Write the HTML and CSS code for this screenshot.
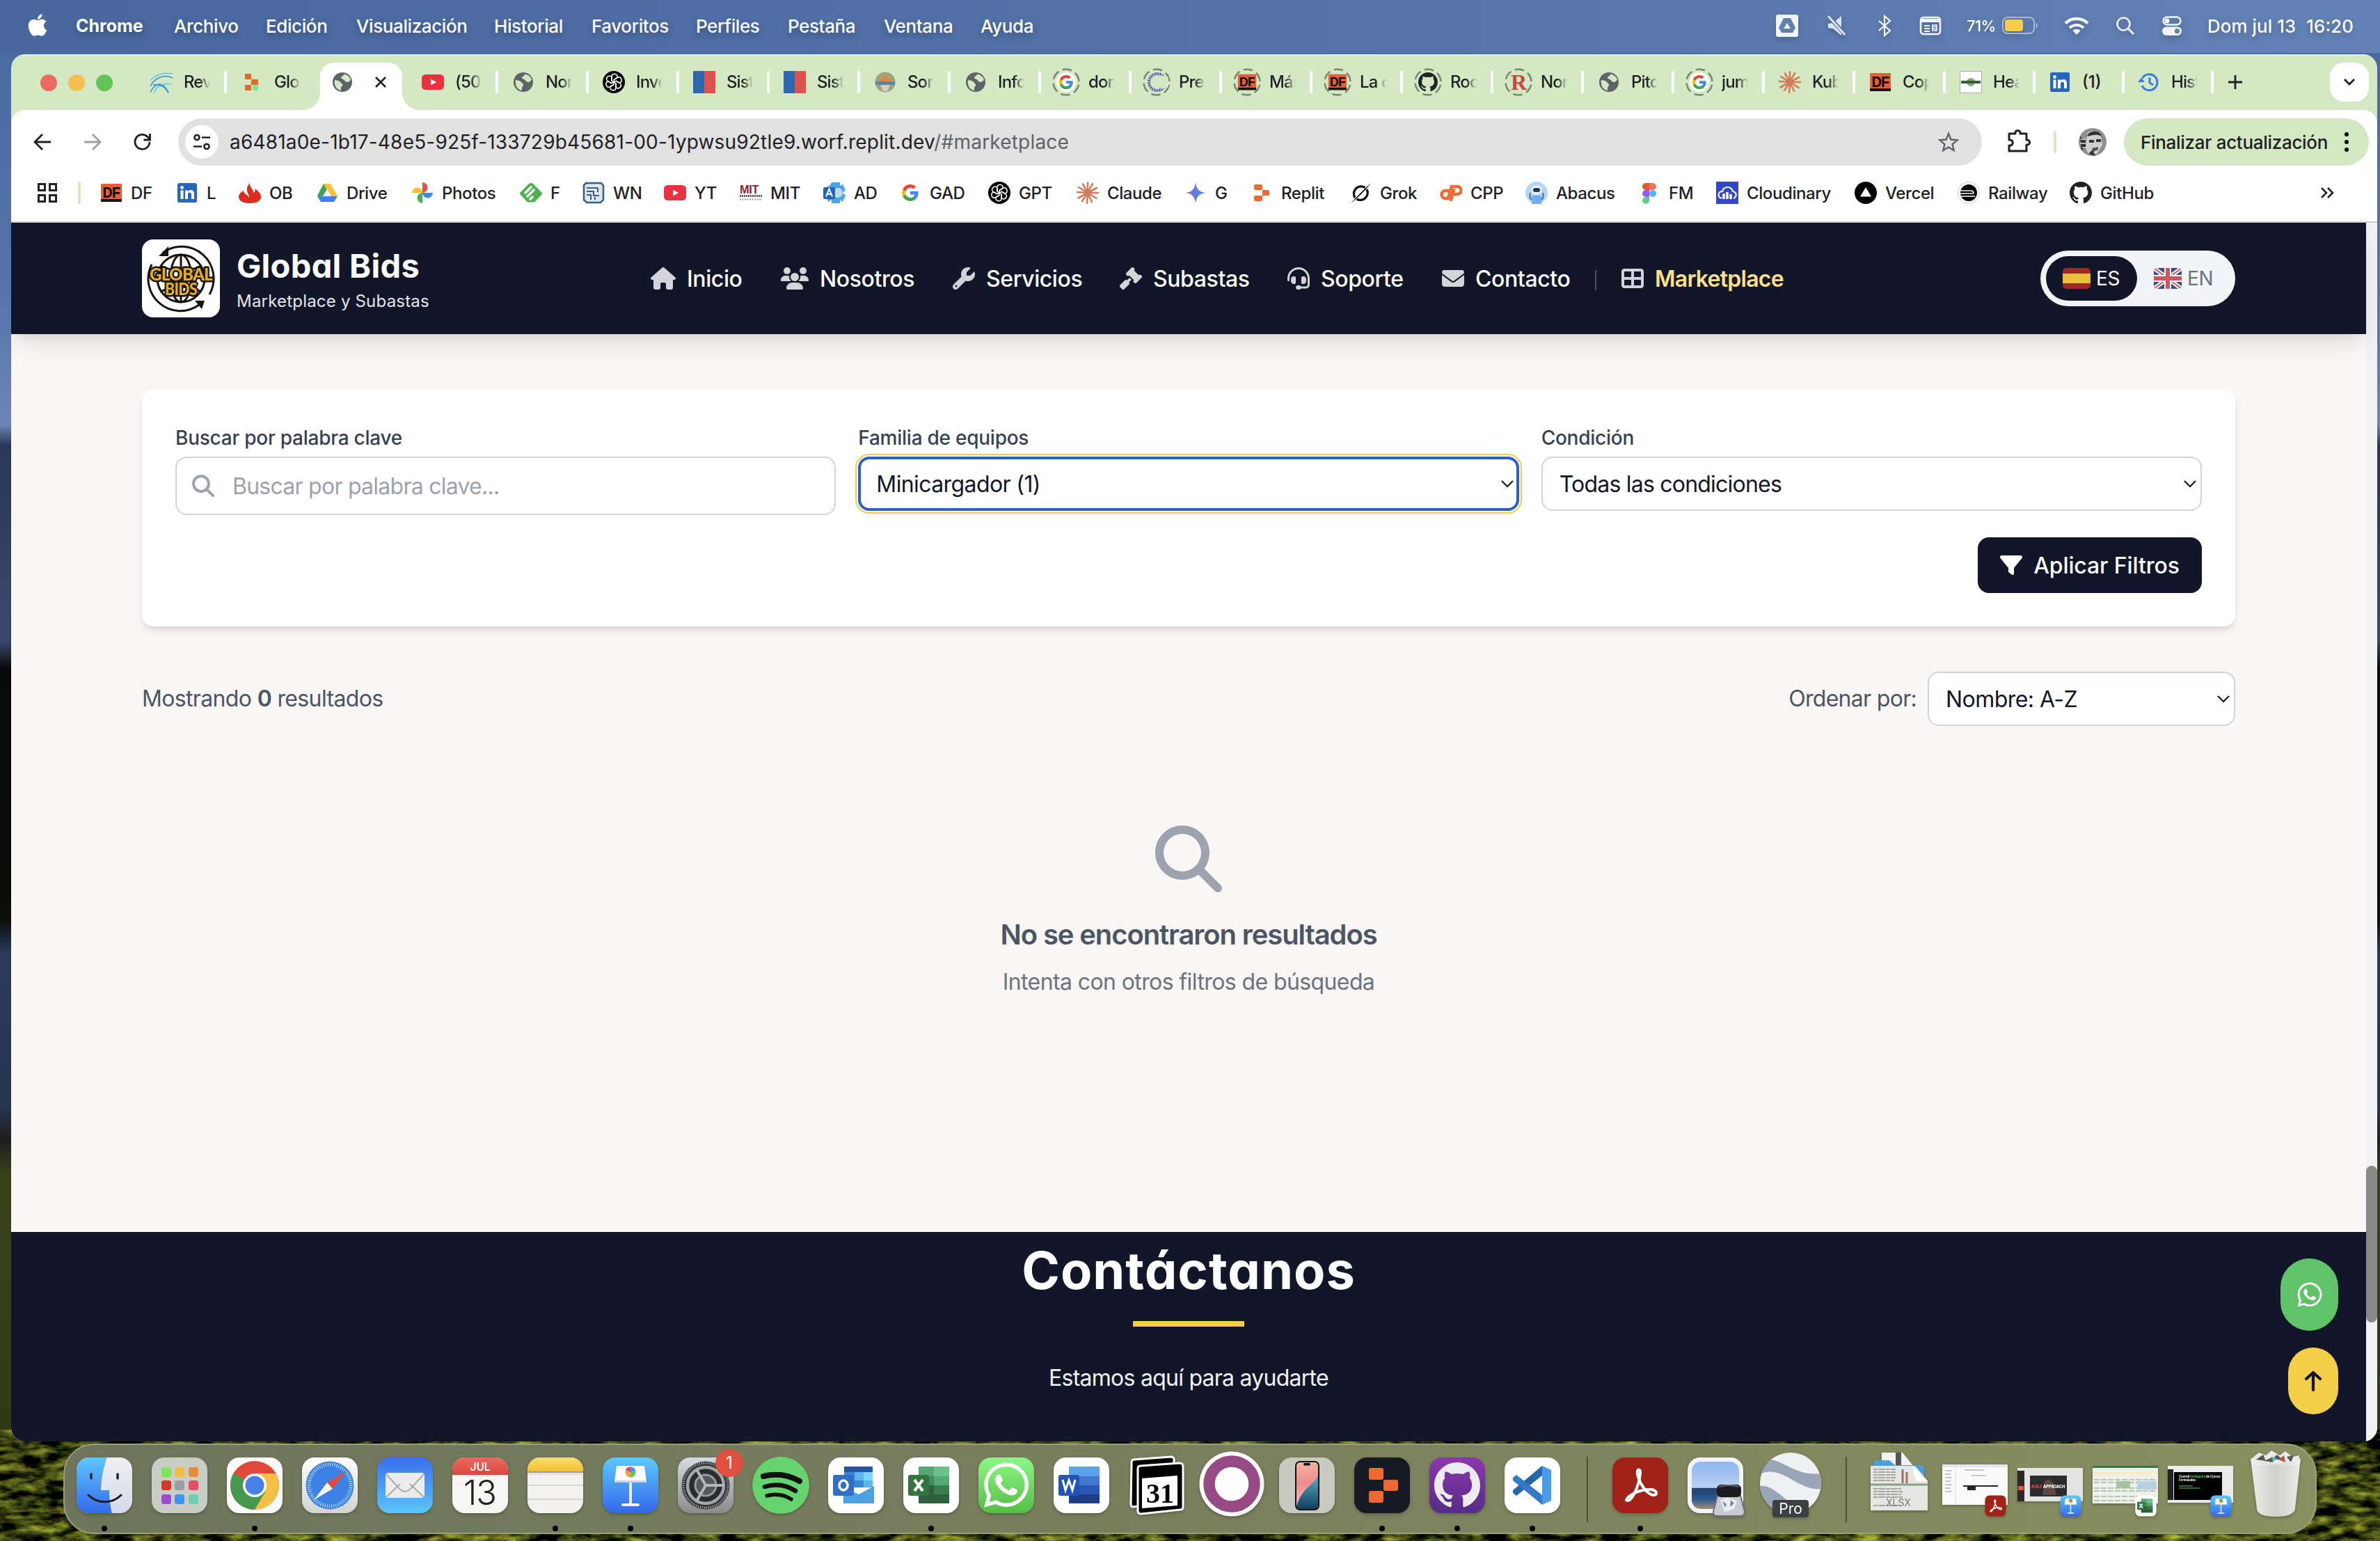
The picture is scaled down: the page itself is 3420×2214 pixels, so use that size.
FILE: index.html
```html
<!DOCTYPE html>
<html lang="es">
<head>
<meta charset="utf-8">
<title>Global Bids - Marketplace y Subastas</title>
<link rel="stylesheet" href="styles.css">
</head>
<body>
<svg class="sprite" aria-hidden="true">
<defs>
<linearGradient id="gSky" x1="0" y1="0" x2="0" y2="1"><stop offset="0" stop-color="#5ec8fa"/><stop offset="1" stop-color="#3468ee"/></linearGradient>
<linearGradient id="gMail" x1="0" y1="0" x2="0" y2="1"><stop offset="0" stop-color="#3a6fee"/><stop offset="1" stop-color="#5bc6f8"/></linearGradient>
<linearGradient id="gFace" x1="0" y1="0" x2="0" y2="1"><stop offset="0" stop-color="#f0f0f2"/><stop offset="1" stop-color="#d3daea"/></linearGradient>
<linearGradient id="gGrey" x1="0" y1="0" x2="0" y2="1"><stop offset="0" stop-color="#ffffff"/><stop offset="1" stop-color="#d2d2d2"/></linearGradient>
<linearGradient id="gGear" x1="0" y1="0" x2="0" y2="1"><stop offset="0" stop-color="#d3dce3"/><stop offset="1" stop-color="#8c8a8b"/></linearGradient>
<linearGradient id="gRed" x1="0" y1="0" x2="0" y2="1"><stop offset="0" stop-color="#ee6a62"/><stop offset="1" stop-color="#d9483f"/></linearGradient>
<linearGradient id="gNote" x1="0" y1="0" x2="0" y2="1"><stop offset="0" stop-color="#fbe075"/><stop offset="1" stop-color="#f1c02e"/></linearGradient>
<linearGradient id="gWa" x1="0" y1="0" x2="0" y2="1"><stop offset="0" stop-color="#8bf785"/><stop offset="1" stop-color="#56bd44"/></linearGradient>
<linearGradient id="gGh" x1="0" y1="0" x2="0" y2="1"><stop offset="0" stop-color="#8b37ab"/><stop offset="1" stop-color="#572c86"/></linearGradient>
<linearGradient id="gStar" x1="0" y1="0" x2="1" y2="0"><stop offset="0" stop-color="#8d6fc4"/><stop offset="1" stop-color="#3f8cf2"/></linearGradient>
<linearGradient id="gTrash" x1="0" y1="0" x2="1" y2="0"><stop offset="0" stop-color="#f4f4f4"/><stop offset=".5" stop-color="#d6d4d2"/><stop offset="1" stop-color="#f1f1f1"/></linearGradient>
<linearGradient id="gPhone" x1="0" y1="0" x2="0" y2="1"><stop offset="0" stop-color="#f2b59d"/><stop offset=".45" stop-color="#ee8d8d"/><stop offset="1" stop-color="#f0c9be"/></linearGradient>
<linearGradient id="gWave" x1="0" y1="0" x2="0" y2="1"><stop offset="0" stop-color="#56b5c8"/><stop offset="1" stop-color="#123b5c"/></linearGradient>
<linearGradient id="gSea" x1="0" y1="0" x2="0" y2="1"><stop offset="0" stop-color="#8fb6ef"/><stop offset=".55" stop-color="#b9cff2"/><stop offset=".56" stop-color="#23406f"/><stop offset=".8" stop-color="#2e5c90"/><stop offset="1" stop-color="#a58a70"/></linearGradient>
<clipPath id="cTile"><rect y="1" width="80" height="80" rx="18"/></clipPath>
<clipPath id="cEarth"><circle cx="40" cy="38" r="44"/></clipPath>

<filter id="fGrass" x="0" y="0" width="100%" height="100%" color-interpolation-filters="sRGB">
<feTurbulence type="fractalNoise" baseFrequency="0.03 0.08" numOctaves="4" seed="8"/>
<feColorMatrix values="1.3 .1 0 0 -0.49  1.3 0 0 0 -0.41  .4 0 0 0 -0.14  0 0 0 0 1"/>
</filter>

<symbol id="apple" viewBox="0 0 384 512"><path d="M318.7 268.7c-.2-36.7 16.4-64.4 50-84.8-18.8-26.9-47.2-41.7-84.7-44.6-35.5-2.8-74.3 20.7-88.5 20.7-15 0-49.4-19.7-76.4-19.7C63.3 141.2 4 184.8 4 273.5q0 39.3 14.4 81.2c12.8 36.7 59 126.7 107.2 125.2 25.2-.6 43-17.9 75.8-17.9 31.8 0 48.3 17.9 76.4 17.9 48.6-.7 90.4-82.5 102.6-119.3-65.2-30.7-61.7-90-61.7-91.9zm-56.6-164.2c27.3-32.4 24.8-61.9 24-72.5-24.1 1.4-52 16.4-67.9 34.9-17.5 19.8-27.8 44.3-25.6 71.9 26.1 2 49.9-11.4 69.5-34.2z"/></symbol>
<symbol id="globe" viewBox="0 0 32 32"><circle cx="16" cy="16" r="14" fill="#5f6368"/><path d="M5 13c2 0 7 1 8 3s3 1 3 4-2 2-2 4v4C8 27 3.500 21 5 13zM18 4.500c0 3-4 3-4 5s4 2 5 4 4 3 6 2 2-3 3-2c0-4-4-8-10-9z" fill="#d3e8c3"/></symbol>
<symbol id="yt" viewBox="0 0 32 32"><rect y="5" width="32" height="22" rx="5.500" fill="#ea323f"/><path d="M13 11.500v9l8-4.500z" fill="#fff"/></symbol>
<symbol id="gpt" viewBox="0 0 32 32"><circle cx="16" cy="16" r="16"/><g fill="none" stroke="#fff" stroke-width="1.500"><path id="petal" d="M16 12.500l5-3a4.200 4.200 0 0 0-8-2.500v7l3 2"/><use href="#petal" transform="rotate(60 16 16)"/><use href="#petal" transform="rotate(120 16 16)"/><use href="#petal" transform="rotate(180 16 16)"/><use href="#petal" transform="rotate(240 16 16)"/><use href="#petal" transform="rotate(300 16 16)"/></g></symbol>
<symbol id="duo" viewBox="0 0 32 32"><path d="M0 0h16v32H0z" fill="#2c68b0"/><path d="M16 0h16v32H16z" fill="#dd5250"/></symbol>
<symbol id="waves" viewBox="0 0 32 32"><g fill="none" stroke="#3f8fd0" stroke-width="1.500"><path d="M0 22C6 10 20 4 32 10"/><path d="M0 14C8 4 22 2 32 4" stroke="#5dc7e8"/><path d="M0 31C6 18 18 12 26 31"/><path d="M6 31c2-10 14-14 24-12" stroke="#5dc7e8"/><path d="M4 20c8-2 18 2 22 12"/></g></symbol>
<symbol id="replitTab" viewBox="0 0 32 32"><path d="M6 4h9v8H6zM15 12h10v8H15zM6 20h9v8H6z" fill="#e8682c"/><circle cx="21" cy="24" r="4.500" fill="#86e08c"/></symbol>
<symbol id="replit" viewBox="0 0 32 32"><path d="M7 4h8a2 2 0 0 1 2 2v6H7a2 2 0 0 1-2-2V6a2 2 0 0 1 2-2zM17 12h8a2 2 0 0 1 2 2v4a2 2 0 0 1-2 2h-8zM5 22a2 2 0 0 1 2-2h10v6a2 2 0 0 1-2 2H7a2 2 0 0 1-2-2z" fill="#ec6a30"/></symbol>
<symbol id="crest" viewBox="0 0 32 32"><circle cx="16" cy="16" r="14.500" fill="#a3a27c"/><path d="M6 16l10-10 10 10z" fill="#d38b4c"/><path d="M2 15h28v5H2z" fill="#5b87a3"/><path d="M9 20h14l-4 9h-6z" fill="#cfd2c0"/></symbol>
<symbol id="google" viewBox="0 0 24 24"><path fill="#4285F4" d="M22.560 12.250c0-.780-.070-1.530-.200-2.250H12v4.260h5.920c-.260 1.370-1.040 2.530-2.210 3.310v2.770h3.570c2.080-1.920 3.280-4.740 3.280-8.090z"/><path fill="#34A853" d="M12 23c2.970 0 5.460-.980 7.280-2.660l-3.570-2.770c-.980.660-2.230 1.060-3.710 1.060-2.860 0-5.290-1.930-6.160-4.530H2.180v2.840C3.990 20.530 7.700 23 12 23z"/><path fill="#FBBC05" d="M5.840 14.090c-.220-.660-.350-1.360-.350-2.090s.130-1.430.350-2.090V7.070H2.180C1.430 8.550 1 10.220 1 12s.430 3.450 1.180 4.930l3.660-2.840z"/><path fill="#EA4335" d="M12 5.380c1.620 0 3.060.560 4.210 1.640l3.150-3.150C17.450 2.090 14.970 1 12 1 7.700 1 3.990 3.470 2.180 7.070l3.660 2.840c.870-2.600 3.300-4.530 6.160-4.530z"/></symbol>
<symbol id="ring" viewBox="0 0 40 40"><circle cx="20" cy="20" r="18.500" fill="none" stroke="#76886f" stroke-width="2.500" stroke-dasharray="13.400 6" transform="rotate(12 20 20)"/></symbol>
<symbol id="df" viewBox="0 0 32 32"><rect x="1" y="3" width="30" height="26" fill="#e45f35"/><rect x="1" y="25" width="30" height="4" fill="#151515"/><text x="16" y="22.500" text-anchor="middle" font-family="Liberation Sans" font-weight="700" font-size="22" textLength="25" lengthAdjust="spacingAndGlyphs">DF</text></symbol>
<symbol id="github" viewBox="0 0 16 16"><path d="M8 0C3.580 0 0 3.580 0 8c0 3.540 2.290 6.530 5.470 7.590.4.070.55-.17.55-.38 0-.19-.01-.82-.01-1.490-2.010.37-2.530-.49-2.690-.94-.09-.23-.48-.94-.82-1.130-.28-.15-.68-.52-.01-.53.63-.01 1.080.58 1.230.82.72 1.210 1.870.87 2.330.66.07-.52.28-.87.51-1.070-1.780-.2-3.640-.89-3.640-3.950 0-.87.31-1.590.82-2.150-.08-.2-.36-1.020.08-2.120 0 0 .67-.21 2.200.82.64-.18 1.320-.27 2-.27s1.360.09 2 .27c1.530-1.040 2.200-.82 2.200-.82.44 1.100.16 1.920.08 2.120.51.56.82 1.270.82 2.150 0 3.070-1.870 3.750-3.650 3.950.29.25.54.73.54 1.480 0 1.070-.01 1.930-.01 2.200 0 .21.15.46.55.38A8.010 8.010 0 0 0 16 8c0-4.420-3.580-8-8-8z"/></symbol>
<symbol id="burst" viewBox="0 0 32 32"><g stroke="#d37a58" stroke-width="2.600" stroke-linecap="round"><path d="M16 16L16 1.500M16 16L23 3M16 16L29 9M16 16L31 16M16 16L28.500 24M16 16L22 29M16 16L15 31M16 16L8 28M16 16L2.500 23.500M16 16L1 15M16 16L3 8M16 16L9 3.500"/></g></symbol>
<symbol id="linkedin" viewBox="0 0 32 32"><rect x="2" y="2" width="28" height="28" rx="2.500" fill="#2965bd"/><path d="M6.500 12.500h4V25h-4zM13 12.500h4V14c2-3 9-3 9 3.500V25h-4v-6.500c0-4-5-4-5 0V25h-4z" fill="#fff"/><circle cx="8.500" cy="8.500" r="2.400" fill="#fff"/></symbol>
<symbol id="history" viewBox="0 0 32 32"><g fill="none" stroke="#3b78e7" stroke-width="3"><path d="M6.500 10.500A11.500 11.500 0 1 1 6 21"/><path d="M17 9.500V17l5 3"/></g><path d="M0 16h10l-5 6z" fill="#3b78e7" transform="rotate(180 5 16)"/></symbol>
<symbol id="santander" viewBox="0 0 32 32"><path d="M16 1c-2 6 6 10 5 15 3-2 3-4 2-6 6 4 9 7 9 12 0 6-7 9-16 9S0 28 0 22c0-4 3-7 7-9 0 5 7 6 8 10 1-4-4-7-3-13 0-4 3-6 4-9z" fill="#db2d20"/></symbol>
<symbol id="drive" viewBox="0 0 32 32"><path d="M11 3h10L8 26 2 20z" fill="#3ea35a"/><path d="M11 3h10l10 18H20z" fill="#f6c141"/><path d="M2 21h29l-5 8H7z" fill="#4180ea"/><path d="M16 11l6 10H10z" fill="#fff"/></symbol>
<symbol id="photos" viewBox="0 0 32 32"><path d="M16 16V1a7.500 7.500 0 0 1 0 15z" fill="#df5448"/><path d="M16 16h15a7.500 7.500 0 0 1-15 0z" fill="#4285f4"/><path d="M16 16v15a7.500 7.500 0 0 1 0-15z" fill="#4fae56"/><path d="M16 16H1a7.500 7.500 0 0 1 15 0z" fill="#f2bf42"/></symbol>
<symbol id="feedly" viewBox="0 0 32 32"><path d="M12.500 3.500a5 5 0 0 1 7 0L31 15q2 2 0 4L21 29.500H11L1 19q-2-2 0-4z" fill="#52b052"/><path d="M8 16l8-8M11 21l9-9M15 25l3-3" stroke="#fff" stroke-width="3.200" stroke-linecap="round"/></symbol>
<symbol id="wn" viewBox="0 0 32 32"><path d="M5 2h22l3 4v20l-4 4H6l-4-4V5z" fill="#dfe7ee" stroke="#355f83" stroke-width="2.500"/><path d="M6 9h16M6 14h10v6h8M6 19h6v7M18 26v-4M22 9v6" stroke="#355f83" stroke-width="2" fill="none"/></symbol>
<symbol id="mit" viewBox="0 0 32 32"><text y="17" font-family="Liberation Sans" font-weight="700" font-size="16" textLength="27" lengthAdjust="spacingAndGlyphs" fill="#902038">MIT</text><path d="M0 20.500h32" stroke="#555" stroke-width="3" stroke-dasharray="2 1"/><path d="M0 25.500h32" stroke="#c88" stroke-width="2" stroke-dasharray="2 1.500"/></symbol>
<symbol id="ad" viewBox="0 0 32 32"><path d="M12 1h12v5l4-2 4 8-4 4 4 4-4 9-4-3v5H12v-5l-5 3-3-9V8l6-3z" fill="#4aa3e4"/><circle cx="21" cy="16" r="7" fill="#bfd9e8"/><rect y="8" width="17" height="17" rx="2" fill="#2464b5"/><path d="M4 21.500l4.500-11 4.500 11M5.500 18h6" stroke="#fff" stroke-width="2" fill="none"/></symbol>
<symbol id="spark" viewBox="0 0 32 32"><path d="M16 1c1.500 10 5 13.500 14 15-9 1.500-12.500 5-14 15C14.500 21 11 17.500 2 16c9-1.500 12.500-5 14-15z" fill="url(#gStar)"/></symbol>
<symbol id="grok" viewBox="0 0 32 32"><g fill="none" stroke="#111" stroke-width="3.400"><path d="M22.500 8.500A10.500 10.500 0 0 0 8 23"/><path d="M10.500 25A10.500 10.500 0 0 0 25 11"/></g><path d="M31 2C22 10 12 20 2 31 12 23 22 14 31 2z"/></symbol>
<symbol id="cpp" viewBox="0 0 32 32"><g fill="none" stroke="#ec6b33" stroke-width="4.500" stroke-linecap="round"><path d="M12 13H8a5.500 5.500 0 0 0 0 11h4l5-17h8a5.500 5.500 0 0 1 0 11h-4"/><path d="M20 12l-4 14"/></g></symbol>
<symbol id="robot" viewBox="0 0 32 32"><circle cx="16" cy="16" r="16" fill="#b6d6f7"/><rect x="9" y="6" width="14" height="12" rx="5" fill="#f4f8fc"/><rect x="11" y="9" width="10" height="6" rx="3" fill="#26364f"/><path d="M9 20h14v12H9z" fill="#6cb0f0"/><path d="M7 16c-2 5 0 9 2 10M25 16c2 5 0 9-2 10" stroke="#526a89" stroke-width="2" fill="none"/></symbol>
<symbol id="figma" viewBox="0 0 32 32"><path d="M16 2h-5a5 5 0 0 0 0 10h5z" fill="#e15b32"/><path d="M16 2h5a5 5 0 0 1 0 10h-5z" fill="#ee7563"/><path d="M16 12h-5a5 5 0 0 0 0 10h5z" fill="#9a56f6"/><circle cx="21" cy="17" r="5" fill="#55b6f5"/><path d="M16 22h-5a5 5 0 1 0 5 5z" fill="#5bd08a"/></symbol>
<symbol id="cloudinary" viewBox="0 0 32 32"><rect width="32" height="32" fill="#3448c5"/><path d="M8 24c-7-2-5-10 1-10 2-8 13-8 15 0 6 1 6 8 1 10" fill="none" stroke="#fff" stroke-width="2.200"/><path d="M11 17v8M16 15v10M21 18v7" stroke="#fff" stroke-width="3.500"/></symbol>
<symbol id="vercel" viewBox="0 0 32 32"><circle cx="16" cy="16" r="16"/><path d="M16 8l8 13.500H8z" fill="#fff"/></symbol>
<symbol id="railway" viewBox="0 0 32 32"><circle cx="16" cy="16" r="15.500" fill="#fff" stroke="#ccc"/><circle cx="16" cy="16" r="12"/><path d="M4 13h15q4 0 4 4M4 17h19M5 21h20" stroke="#fff" stroke-width="1.700" fill="none"/></symbol>
<symbol id="health" viewBox="0 0 32 32"><rect x=".5" y=".5" width="31" height="31" fill="#fff" stroke="#aaa"/><circle cx="16" cy="16" r="6" fill="#8fa78a"/><path d="M2 14h28v4H2z" fill="#3c5f39"/></symbol>
<symbol id="rmono" viewBox="0 0 32 32"><text x="16" y="27" text-anchor="middle" font-family="Liberation Serif" font-size="32" font-weight="700" fill="#c9473e">R</text></symbol>
<symbol id="cdots" viewBox="0 0 32 32"><circle cx="16" cy="16" r="12" fill="none" stroke="#6a63b4" stroke-width="4" stroke-dasharray="2.500 1" /><path d="M22 6l10 3v14l-10 3z" fill="#d3e8c3"/></symbol>

<symbol id="chev" viewBox="0 0 20 12"><path d="M2 2l8 8 8-8" fill="none" stroke="currentColor" stroke-width="2.200"/></symbol>
<symbol id="mag" viewBox="0 0 512 512"><path d="M416 208c0 45.900-14.900 88.300-40 122.700L502.600 457.400c12.500 12.500 12.500 32.800 0 45.300s-32.800 12.500-45.300 0L330.700 376c-34.400 25.200-76.800 40-122.700 40C93.100 416 0 322.900 0 208S93.100 0 208 0S416 93.100 416 208zM208 352a144 144 0 1 0 0-288 144 144 0 1 0 0 288z"/></symbol>
<symbol id="house" viewBox="0 0 576 512"><path d="M575.800 255.500c0 18-15 32.100-32 32.100h-32l.7 160.200c0 2.700-.2 5.400-.5 8.100V472c0 22.100-17.900 40-40 40H456c-1.100 0-2.200 0-3.300-.1c-1.400 .1-2.800 .1-4.200 .1H416 392c-22.100 0-40-17.900-40-40V448 384c0-17.700-14.300-32-32-32H256c-17.700 0-32 14.300-32 32v64 24c0 22.100-17.900 40-40 40H160 128.100c-1.500 0-3-.1-4.500-.2c-1.200 .1-2.400 .2-3.600 .2H104c-22.100 0-40-17.900-40-40V360c0-.9 0-1.900 .1-2.800V287.600H32c-18 0-32-14-32-32.100c0-9 3-17 10-24L266.400 8c7-7 15-8 22-8s15 2 21 7L564.800 231.500c8 7 12 15 11 24z"/></symbol>
<symbol id="users" viewBox="0 0 640 512"><path d="M144 0a80 80 0 1 1 0 160A80 80 0 1 1 144 0zM512 0a80 80 0 1 1 0 160A80 80 0 1 1 512 0zM0 298.700C0 239.800 47.800 192 106.700 192h42.700c15.900 0 31 3.500 44.600 9.700c-1.300 7.200-1.900 14.700-1.900 22.300c0 38.200 16.800 72.500 43.300 96H21.300C9.600 320 0 310.400 0 298.700zM405.300 320c26-23.500 42.700-57.800 42.700-96c0-7.600-.7-15-1.900-22.300c13.600-6.300 28.700-9.700 44.600-9.700h42.700C592.200 192 640 239.800 640 298.700c0 11.800-9.600 21.300-21.300 21.300H405.300zM224 224a96 96 0 1 1 192 0 96 96 0 1 1 -192 0zM128 485.300C128 411.700 187.700 352 261.300 352H378.700C452.300 352 512 411.700 512 485.300c0 14.700-11.900 26.700-26.700 26.700H154.700c-14.700 0-26.700-11.900-26.700-26.700z"/></symbol>
<symbol id="wrench" viewBox="0 0 512 512"><path d="M352 320c88.400 0 160-71.600 160-160c0-15.300-2.200-30.100-6.200-44.200c-3.100-10.800-16.400-13.200-24.300-5.300l-76.800 76.800c-3 3-7.100 4.700-11.300 4.700H336c-8.800 0-16-7.200-16-16V118.600c0-4.200 1.700-8.300 4.700-11.300l76.800-76.800c7.900-7.900 5.400-21.200-5.300-24.300C382.100 2.200 367.300 0 352 0C263.600 0 192 71.600 192 160c0 19.100 3.400 37.500 9.500 54.500L19.900 396.100C7.200 408.800 0 426.100 0 444.100C0 481.600 30.400 512 67.900 512c18 0 35.300-7.200 48-19.900L297.500 310.500c17 6.200 35.400 9.500 54.500 9.500zM80 408a24 24 0 1 1 0 48 24 24 0 1 1 0-48z"/></symbol>
<symbol id="gavel" viewBox="0 0 512 512"><path d="M318.600 9.400c-12.500-12.500-32.800-12.500-45.300 0l-120 120c-12.500 12.500-12.500 32.800 0 45.300l16 16c12.500 12.500 32.800 12.500 45.300 0l4-4L325.400 293.400l-4 4c-12.500 12.500-12.500 32.800 0 45.300l16 16c12.500 12.500 32.800 12.500 45.300 0l120-120c12.500-12.500 12.500-32.800 0-45.300l-16-16c-12.500-12.500-32.800-12.500-45.300 0l-4 4L330.600 74.600l4-4c12.500-12.500 12.500-32.800 0-45.300l-16-16zm-152 288c-12.500-12.500-32.800-12.500-45.300 0l-112 112c-12.500 12.500-12.500 32.800 0 45.300l48 48c12.500 12.500 32.800 12.500 45.300 0l112-112c12.500-12.500 12.500-32.800 0-45.300l-1.400-1.400L272 285.300 226.700 240 168 298.700l-1.400-1.400z"/></symbol>
<symbol id="headset" viewBox="0 0 512 512"><path d="M256 48C141.100 48 48 141.100 48 256v40c0 13.300-10.700 24-24 24s-24-10.700-24-24V256C0 114.600 114.600 0 256 0S512 114.600 512 256V400.100c0 48.600-39.400 88-88.100 88L313.600 488c-8.300 14.300-23.800 24-41.600 24H240c-26.500 0-48-21.500-48-48s21.500-48 48-48h32c17.800 0 33.300 9.700 41.600 24l110.400 .1c22.100 0 40-17.900 40-40V256c0-114.900-93.100-208-208-208zM144 208h16c17.700 0 32 14.300 32 32V352c0 17.700-14.300 32-32 32H144c-35.300 0-64-28.700-64-64V272c0-35.300 28.700-64 64-64zm224 0c35.300 0 64 28.700 64 64v48c0 35.300-28.700 64-64 64H352c-17.700 0-32-14.300-32-32V240c0-17.700 14.300-32 32-32h16z"/></symbol>
<symbol id="envelope" viewBox="0 0 512 512"><path d="M48 64C21.500 64 0 85.500 0 112c0 15.100 7.100 29.300 19.200 38.400L236.800 313.600c11.400 8.500 27 8.500 38.400 0L492.800 150.400c12.100-9.100 19.200-23.300 19.200-38.400c0-26.500-21.500-48-48-48H48zM0 176V384c0 35.300 28.700 64 64 64H448c35.300 0 64-28.700 64-64V176L294.400 339.200c-22.800 17.100-54 17.100-76.800 0L0 176z"/></symbol>
<symbol id="table" viewBox="0 0 512 512"><path d="M448 96V224H288V96H448zm0 192V416H288V288H448zM224 224H64V96H224V224zM64 288H224V416H64V288zM64 32C28.700 32 0 60.700 0 96V416c0 35.300 28.700 64 64 64H448c35.300 0 64-28.700 64-64V96c0-35.300-28.700-64-64-64H64z"/></symbol>
<symbol id="filter" viewBox="0 0 512 512"><path d="M3.900 54.900C10.500 40.900 24.500 32 40 32H472c15.500 0 29.500 8.900 36.100 22.900s4.600 30.500-5.200 42.500L320 320.900V448c0 12.100-6.800 23.200-17.700 28.600s-23.800 4.300-33.500-3l-64-48c-8.100-6-12.800-15.500-12.800-25.600V320.900L9 97.300C-.7 85.400-2.800 68.800 3.900 54.900z"/></symbol>
<symbol id="wa" viewBox="0 0 448 512"><path d="M380.900 97.100C339 55.100 283.200 32 223.900 32c-122.400 0-222 99.600-222 222 0 39.100 10.200 77.300 29.600 111L0 480l117.700-30.900c32.400 17.700 68.900 27 106.100 27h.1c122.300 0 224.100-99.600 224.100-222 0-59.300-25.200-115-67.100-157zm-157 341.600c-33.200 0-65.700-8.900-94-25.700l-6.700-4-69.800 18.300L72 359.200l-4.400-7c-18.500-29.400-28.200-63.300-28.200-98.200 0-101.700 82.800-184.500 184.600-184.500 49.300 0 95.600 19.200 130.400 54.100 34.800 34.900 56.200 81.200 56.100 130.500 0 101.800-84.900 184.600-186.600 184.600zm101.200-138.200c-5.500-2.800-32.800-16.200-37.900-18-5.100-1.900-8.800-2.800-12.500 2.800-3.700 5.600-14.300 18-17.600 21.800-3.200 3.700-6.500 4.200-12 1.400-32.600-16.300-54-29.100-75.500-66-5.700-9.800 5.700-9.100 16.300-30.300 1.800-3.700.9-6.900-.5-9.700-1.400-2.800-12.500-30.100-17.100-41.200-4.500-10.800-9.100-9.300-12.500-9.500-3.200-.2-6.900-.2-10.600-.2-3.700 0-9.700 1.400-14.800 6.900-5.100 5.600-19.400 19-19.400 46.300 0 27.300 19.900 53.700 22.600 57.400 2.800 3.700 39.100 59.700 94.800 83.800 35.200 15.200 49 16.500 66.600 13.900 10.700-1.600 32.800-13.400 37.400-26.400 4.600-13 4.600-24.100 3.200-26.400-1.300-2.500-5-3.900-10.500-6.600z"/></symbol>

<symbol id="dKeynote" viewBox="0 0 80 82"><rect y="1" width="80" height="80" rx="18" fill="url(#gSky)"/><path d="M38 36h4v34h-4z" fill="#e9edf2"/><rect x="27" y="67" width="26" height="4" rx="2" fill="#f2f2f2"/><path d="M20 13h40l3 23H17z" fill="#fafafa"/><path d="M17 34h46v3H17z" fill="#cdd5df"/><circle cx="40" cy="22" r="7.500" fill="#f1a33c"/><path d="M40 22v-7.500a7.500 7.500 0 0 1 7 5z" fill="#4a8df0"/><path d="M40 22l7-2.500a7.500 7.500 0 0 1-7 10z" fill="#59c26c"/><path d="M40 22l-7-3a7.500 7.500 0 0 1 7-4.500z" fill="#d7456a"/></symbol>
<symbol id="dAcrobat" viewBox="0 0 80 82"><rect y="1" width="80" height="80" rx="18" fill="#a12318"/><path d="M20 62c6 6 18-18 20-38 1-8-6-7-4 1 3 14 14 30 24 30 7-1 2-9-7-8-12 0-30 7-33 15z" fill="none" stroke="#fff" stroke-width="4"/></symbol>
<symbol id="dExcel" viewBox="0 0 80 82"><rect y="1" width="80" height="80" rx="18" fill="#fff"/><path d="M22 14h22v14H22z" fill="#56a772"/><path d="M44 14h22v14H44z" fill="#69c28b"/><path d="M22 28h22v13H22z" fill="#3f8f58"/><path d="M44 28h22v13H44z" fill="#57a873"/><path d="M22 41h44v26H22z" fill="#2e5f3e"/><path d="M44 41h22v13H44z" fill="#3c7d4c"/><rect x="7" y="26" width="30" height="30" rx="3" fill="#34753f"/><path d="M16 33l12 16M28 33L16 49" stroke="#fff" stroke-width="4"/></symbol>
</defs>
</svg>

<svg class="wallpaper" viewBox="0 0 3420 160" aria-hidden="true"><rect width="3420" height="160" filter="url(#fGrass)"/></svg>

<header class="menubar">
  <div class="menus">
    <svg class="apple-logo"><use href="#apple"/></svg>
    <b>Chrome</b><span>Archivo</span><span>Edición</span><span>Visualización</span><span>Historial</span><span>Favoritos</span><span>Perfiles</span><span>Pestaña</span><span>Ventana</span><span>Ayuda</span>
  </div>
  <div class="status">
    <svg width="32" height="32" viewBox="0 0 32 32"><rect width="32" height="32" rx="3" fill="#f1f4f9"/><path d="M11 5h10l7 14-4 7H8l-4-7z" fill="#6080b1"/><path d="M16 12l5 8H11z" fill="#f1f4f9"/></svg>
    <svg width="32" height="32" viewBox="0 0 32 32"><path d="M3 13l7-1L22 2v28L10 20l-7-1z" fill="#dfe5f0"/><path d="M4 3l24 26" stroke="#6080b1" stroke-width="6"/><path d="M3 2l24 27" stroke="#f1f4f9" stroke-width="2.400"/></svg>
    <svg width="28" height="32" viewBox="0 0 28 32"><path d="M6 9l16 14-8 7V2l8 7L6 23" fill="none" stroke="#f1f4f9" stroke-width="2.200"/></svg>
    <svg width="32" height="28" viewBox="0 0 32 28"><rect x="2" y="2" width="28" height="24" rx="4" fill="none" stroke="#f1f4f9" stroke-width="2.600"/><path d="M2 4h28v5H2zM7 13h8v2H7zM7 17h8v2H7zM7 21h8v2H7z" fill="#f1f4f9"/><path d="M19 13h6v8h-6zM19 15.500h6M19 18.500h6" fill="none" stroke="#f1f4f9" stroke-width="1.600"/></svg>
    <div class="battery"><span>71%</span><svg width="52" height="26" viewBox="0 0 52 26"><rect x="1" y="1" width="45" height="23" rx="7" fill="none" stroke="#a9b9d6" stroke-width="2"/><rect x="4" y="4" width="26" height="17" rx="4" fill="#f7cd46"/><path d="M48.500 8.500c3 1 3 7 0 8z" fill="#a9b9d6"/></svg></div>
    <svg width="36" height="28" viewBox="0 0 36 28"><g fill="none" stroke="#f1f4f9" stroke-width="4.200"><path d="M2 10.500a22.500 22.500 0 0 1 32 0"/><path d="M8 17a14.500 14.500 0 0 1 20 0"/></g><path d="M18 27l-5.500-6a8 8 0 0 1 11 0z" fill="#f1f4f9"/></svg>
    <svg width="28" height="28" viewBox="0 0 28 28"><circle cx="11.500" cy="11.500" r="9" fill="none" stroke="#f1f4f9" stroke-width="2.600"/><path d="M18 18l8 8" stroke="#f1f4f9" stroke-width="3"/></svg>
    <svg width="30" height="28" viewBox="0 0 30 28"><rect x="2.500" y="1.500" width="25" height="11" rx="5.500" fill="none" stroke="#f1f4f9" stroke-width="2.400"/><circle cx="8" cy="7" r="3.500" fill="#f1f4f9"/><rect x="1" y="15.500" width="28" height="12.500" rx="6.200" fill="#f1f4f9"/><circle cx="22.500" cy="21.700" r="3.600" fill="#6080b1"/></svg>
    <span class="clock"><span>Dom jul 13</span><span>16:20</span></span>
  </div>
</header>

<main class="browser">
  <div class="tabstrip">
    <div class="lights"><i class="light red"></i><i class="light amber"></i><i class="light green"></i></div>
    <div class="tabs">
      <div class="tab"><svg><use href="#waves"/></svg><span>Rev</span></div>
      <div class="tab plain"><svg><use href="#replitTab"/></svg><span>Glob</span></div>
      <div class="tab active"><svg><use href="#globe"/></svg><svg class="close" viewBox="0 0 18 18"><path d="M2 2l14 14M16 2L2 16" stroke="#1f2023" stroke-width="2.600"/></svg></div>
      <div class="tab"><svg><use href="#yt"/></svg><span>(50)</span></div>
      <div class="tab"><svg><use href="#globe"/></svg><span>Nor</span></div>
      <div class="tab"><svg><use href="#gpt"/></svg><span>Inve</span></div>
      <div class="tab"><svg><use href="#duo"/></svg><span>Sist</span></div>
      <div class="tab"><svg><use href="#duo"/></svg><span>Sist</span></div>
      <div class="tab"><svg><use href="#crest"/></svg><span>Son</span></div>
      <div class="tab"><svg><use href="#globe"/></svg><span>Info</span></div>
      <div class="tab"><svg class="ringed" viewBox="0 0 40 40"><use href="#ring"/><circle cx="20" cy="20" r="14" fill="#fff"/><use href="#google" x="9" y="9" width="22" height="22"/></svg><span>dom</span></div>
      <div class="tab"><svg class="ringed" viewBox="0 0 40 40"><use href="#ring"/><use href="#cdots" x="5" y="4" width="32" height="32"/></svg><span>Pre</span></div>
      <div class="tab"><svg class="ringed" viewBox="0 0 40 40"><use href="#ring"/><use href="#df" x="6" y="6" width="28" height="28"/></svg><span>Más</span></div>
      <div class="tab"><svg class="ringed" viewBox="0 0 40 40"><use href="#ring"/><use href="#df" x="6" y="6" width="28" height="28"/></svg><span>La c</span></div>
      <div class="tab"><svg class="ringed" viewBox="0 0 40 40"><use href="#ring"/><use href="#github" x="6" y="6" width="28" height="28" fill="#1f2328"/></svg><span>Roc</span></div>
      <div class="tab"><svg class="ringed" viewBox="0 0 40 40"><use href="#ring"/><use href="#rmono" x="4" y="4" width="32" height="32"/></svg><span>Nor</span></div>
      <div class="tab"><svg><use href="#globe"/></svg><span>Pitc</span></div>
      <div class="tab"><svg class="ringed" viewBox="0 0 40 40"><use href="#ring"/><circle cx="20" cy="20" r="14" fill="#fff"/><use href="#google" x="9" y="9" width="22" height="22"/></svg><span>jum</span></div>
      <div class="tab"><svg><use href="#burst"/></svg><span>Kub</span></div>
      <div class="tab"><svg><use href="#df"/></svg><span>Cop</span></div>
      <div class="tab narrow"><svg><use href="#health"/></svg><span>Hea</span></div>
      <div class="tab narrow"><svg><use href="#linkedin"/></svg><span class="whole">(1)</span></div>
      <div class="tab narrow"><svg><use href="#history"/></svg><span>Hist</span></div>
    </div>
    <svg class="newtab" viewBox="0 0 22 22"><path d="M11 1v20M1 11h20" stroke="#1f2023" stroke-width="2.800"/></svg>
    <div class="tabmenu"><svg viewBox="0 0 20 12"><path d="M3 2l7 7 7-7" fill="none" stroke="#1f2023" stroke-width="2.800"/></svg></div>
  </div>

  <div class="toolbar">
    <svg class="tool" viewBox="0 0 28 28"><path d="M26 14H3M14 3L3 14l11 11" fill="none" stroke="#1f2023" stroke-width="2.800"/></svg>
    <svg class="tool" viewBox="0 0 28 28"><path d="M2 14h23M14 3l11 11-11 11" fill="none" stroke="#a0a0a0" stroke-width="2.800"/></svg>
    <svg class="tool" viewBox="0 0 28 28"><path d="M24 14a10.500 10.500 0 1 1-3-7.500l3 3M24.500 2v9h-9" fill="none" stroke="#1f2023" stroke-width="2.800"/></svg>
    <div class="omnibox">
      <div class="siteinfo"><svg viewBox="0 0 26 26"><g fill="none" stroke="#1f2023" stroke-width="2.600"><circle cx="6" cy="6.500" r="3.500"/><path d="M13 6.500h12M1 19.500h12"/><circle cx="20" cy="19.500" r="3.500"/></g></svg></div>
      <span class="url">a6481a0e-1b17-48e5-925f-133729b45681-00-1ypwsu92tle9.worf.replit.dev<em>/#marketplace</em></span>
      <svg class="star" viewBox="0 0 32 32"><path d="M16 4l3.500 8.500 9 .8-6.900 6 2.100 8.900L16 23.500l-7.700 4.700 2.100-8.900-6.900-6 9-.8z" fill="none" stroke="#5f6368" stroke-width="2.400"/></svg>
    </div>
    <svg class="puzzle" viewBox="0 0 36 36"><path d="M3 8h9c-1-6 8-6 7 0h9v9c6-1 6 8 0 7v9H3v-8c7 1 7-9 0-8z" fill="none" stroke="#1f2023" stroke-width="3" stroke-linejoin="round"/></svg>
    <i class="tooldiv"></i>
    <svg class="avatar" viewBox="0 0 40 40"><circle cx="20" cy="20" r="20" fill="#8f8f8f"/><path d="M12 8c6-7 18-5 20 4l2 12-8 13H14l-4-8z" fill="#cfcfcf"/><path d="M12 12c2-9 18-11 21 0-7-4-13-2-21 0zM15 17h7v4h-7zM25 16h7v4h-7z" fill="#333"/><path d="M19 29l9-2v4l-7 3z" fill="#555"/><path d="M2 12l8 6v10l-6 4zM14 37l6-6 4 9z" fill="#333"/><path d="M3 16h7M2 22h8M5 28h6" stroke="#ddd" stroke-width="1.500"/></svg>
    <div class="update"><span>Finalizar actualización</span><svg viewBox="0 0 6 28"><circle cx="3" cy="3" r="3"/><circle cx="3" cy="14" r="3"/><circle cx="3" cy="25" r="3"/></svg></div>
  </div>

  <div class="bookmarks">
    <svg class="apps" viewBox="0 0 28 28"><path d="M1.500 1.500h9v9h-9zM17.500 1.500h9v9h-9zM1.500 17.500h9v9h-9zM17.500 17.500h9v9h-9z" fill="none" stroke="#1f2023" stroke-width="3"/></svg>
    <i class="tooldiv"></i>
    <a><svg><use href="#df"/></svg>DF</a>
    <a><svg><use href="#linkedin"/></svg>L</a>
    <a><svg><use href="#santander"/></svg>OB</a>
    <a><svg><use href="#drive"/></svg>Drive</a>
    <a><svg><use href="#photos"/></svg>Photos</a>
    <a><svg><use href="#feedly"/></svg>F</a>
    <a><svg><use href="#wn"/></svg>WN</a>
    <a><svg><use href="#yt"/></svg>YT</a>
    <a><svg><use href="#mit"/></svg>MIT</a>
    <a><svg><use href="#ad"/></svg>AD</a>
    <a><svg viewBox="0 0 32 32"><use href="#google" x="3" y="3" width="26" height="26"/></svg>GAD</a>
    <a><svg><use href="#gpt"/></svg>GPT</a>
    <a><svg><use href="#burst"/></svg>Claude</a>
    <a><svg><use href="#spark"/></svg>G</a>
    <a><svg><use href="#replit"/></svg>Replit</a>
    <a><svg><use href="#grok"/></svg>Grok</a>
    <a><svg><use href="#cpp"/></svg>CPP</a>
    <a><svg><use href="#robot"/></svg>Abacus</a>
    <a><svg><use href="#figma"/></svg>FM</a>
    <a><svg><use href="#cloudinary"/></svg>Cloudinary</a>
    <a><svg><use href="#vercel"/></svg>Vercel</a>
    <a><svg><use href="#railway"/></svg>Railway</a>
    <a><svg fill="#1f2328"><use href="#github"/></svg>GitHub</a>
    <svg class="more" viewBox="0 0 20 16"><path d="M2 1l7 7-7 7M11 1l7 7-7 7" fill="none" stroke="#1f2023" stroke-width="2.500"/></svg>
  </div>

  <div class="viewport">
    <div class="page">
      <nav class="sitenav">
        <div class="brand">
          <svg class="logo" viewBox="0 0 112 112">
            <rect width="112" height="112" rx="16" fill="#fff"/>
            <g fill="none" stroke="#16130f" stroke-width="3">
              <path d="M30 19A46 46 0 0 1 97 79M82 94A46 46 0 0 1 14 36" />
              <circle cx="56" cy="56" r="34"/><ellipse cx="56" cy="56" rx="15" ry="34"/><path d="M56 22v68M27 38q29 14 58 0M27 75q29-14 58 0"/>
            </g>
            <path d="M38 10L24 24l14 0zM76 88l14 0-4 12z" fill="#16130f"/>
            <g font-family="Lato, sans-serif" font-weight="900" text-anchor="middle" fill="#e8ab27" stroke="#16130f" stroke-width="5" paint-order="stroke" stroke-linejoin="round"><text x="56" y="59" font-size="25" textLength="90" lengthAdjust="spacingAndGlyphs">GLOBAL</text><text x="56" y="80" font-size="25" textLength="46" lengthAdjust="spacingAndGlyphs">BIDS</text></g>
          </svg>
          <div class="brandtext"><strong>Global Bids</strong><span>Marketplace y Subastas</span></div>
        </div>
        <div class="links">
          <a><svg class="w36"><use href="#house"/></svg>Inicio</a>
          <a><svg class="w40"><use href="#users"/></svg>Nosotros</a>
          <a><svg><use href="#wrench"/></svg>Servicios</a>
          <a><svg><use href="#gavel"/></svg>Subastas</a>
          <a><svg><use href="#headset"/></svg>Soporte</a>
          <a><svg><use href="#envelope"/></svg>Contacto</a>
          <i></i>
          <a class="current"><svg><use href="#table"/></svg>Marketplace</a>
        </div>
        <div class="lang">
          <div class="on"><svg viewBox="0 0 40 30"><rect width="40" height="30" rx="5" fill="#9e2b23"/><path d="M0 8h40v14H0z" fill="#e9bf3e"/></svg>ES</div>
          <div><svg viewBox="0 0 40 30"><defs><clipPath id="cFlag"><rect width="40" height="30" rx="5"/></clipPath></defs><g clip-path="url(#cFlag)"><path d="M0 0h40v30H0z" fill="#3c4a85"/><path d="M0 0l40 30M40 0L0 30" stroke="#fff" stroke-width="6"/><path d="M0 0l40 30M40 0L0 30" stroke="#cf5560" stroke-width="2"/><path d="M20 0v30M0 15h40" stroke="#fff" stroke-width="10"/><path d="M20 0v30M0 15h40" stroke="#cf5560" stroke-width="6"/></g></svg>EN</div>
        </div>
      </nav>

      <section class="market">
        <form class="filters">
          <div class="field"><label>Buscar por palabra clave</label><div class="input"><svg><use href="#mag"/></svg><span>Buscar por palabra clave...</span></div></div>
          <div class="field"><label>Familia de equipos</label><div class="select focus"><span>Minicargador (1)</span><svg><use href="#chev"/></svg></div></div>
          <div class="field"><label>Condición</label><div class="select"><span>Todas las condiciones</span><svg><use href="#chev"/></svg></div></div>
          <div class="apply"><svg><use href="#filter"/></svg><span>Aplicar Filtros</span></div>
        </form>
        <div class="results">
          <p>Mostrando <b>0</b> resultados</p>
          <div class="sort"><span>Ordenar por:</span><div class="select"><span>Nombre: A-Z</span><svg><use href="#chev"/></svg></div></div>
        </div>
        <div class="empty">
          <svg><use href="#mag"/></svg>
          <h3>No se encontraron resultados</h3>
          <p>Intenta con otros filtros de búsqueda</p>
        </div>
      </section>

      <section class="contact">
        <h2>Contáctanos</h2>
        <i></i>
        <p>Estamos aquí para ayudarte</p>
      </section>

      <div class="floaters">
        <div class="wabtn"><svg><use href="#wa"/></svg></div>
        <div class="upbtn"><svg viewBox="0 0 28 32"><path d="M14 29V4M4 13L14 4l10 9" fill="none" stroke="#111628" stroke-width="4.200" stroke-linecap="round" stroke-linejoin="round"/></svg></div>
      </div>
    </div>
    <div class="scrollbar"><i></i></div>
  </div>
</main>

<footer class="dock">
  <div class="app running"><svg viewBox="0 0 80 82"><g clip-path="url(#cTile)"><path d="M0 0h80v82H0z" fill="url(#gFace)"/><path d="M0 0h44c-5 16-9 32-9 48h12c0 12 1 22 4 34H0z" fill="url(#gSky)"/></g><path d="M21 25v6M59 25v6" stroke="#223" stroke-width="3.500" stroke-linecap="round"/><path d="M17 55c13 13 34 13 47 0" fill="none" stroke="#15181f" stroke-width="3" stroke-linecap="round"/></svg></div>
  <div class="app"><svg viewBox="0 0 80 82"><rect y="1" width="80" height="80" rx="18" fill="#cacdc4"/><rect x="14" y="15" width="14" height="14" rx="3.500" fill="#7fe35b"/><rect x="33" y="15" width="14" height="14" rx="3.500" fill="#f3bb41"/><rect x="53" y="15" width="14" height="14" rx="3.500" fill="#e48c37"/><rect x="14" y="34" width="14" height="14" rx="3.500" fill="#cf3a2c"/><rect x="33" y="34" width="14" height="14" rx="3.500" fill="#97a0a5"/><rect x="53" y="34" width="14" height="14" rx="3.500" fill="#e64c62"/><rect x="14" y="54" width="14" height="14" rx="3.500" fill="#9b4bd3"/><rect x="33" y="54" width="14" height="14" rx="3.500" fill="#3d93ef"/><rect x="53" y="54" width="14" height="14" rx="3.500" fill="#69cfae"/></svg></div>
  <div class="app running"><svg viewBox="0 0 80 82"><rect y="1" width="80" height="80" rx="18" fill="#fafaf8"/><circle cx="40" cy="41" r="35" fill="#e0493a"/><path d="M40 41L9.700 23.500A35 35 0 0 0 40 76l16-26z" fill="#459a50"/><path d="M40 24h30.500A35 35 0 0 1 40 76l15.500-26z" fill="#f3bf44"/><circle cx="40" cy="41" r="17" fill="#fff"/><circle cx="40" cy="41" r="13.500" fill="#4a7fe8"/></svg></div>
  <div class="app"><svg viewBox="0 0 80 82"><rect y="1" width="80" height="80" rx="18" fill="url(#gGrey)"/><circle cx="40" cy="41" r="34.500" fill="#3a82e6"/><circle cx="40" cy="41" r="30" fill="none" stroke="#cfe3fa" stroke-width="5" stroke-dasharray="1 2.140"/><path d="M64 20L44 46l-8-9z" fill="#e04a3c"/><path d="M17 62l19-25 8 9z" fill="#f5f5f5"/></svg></div>
  <div class="app"><svg viewBox="0 0 80 82"><rect y="1" width="80" height="80" rx="18" fill="url(#gMail)"/><rect x="12" y="23" width="56" height="36" rx="4" fill="#ececec"/><path d="M13 58l20-19M67 58L47 39M13 25l20 22q7 6 14 0l20-22" fill="none" stroke="#a9adb3" stroke-width="2"/></svg></div>
  <div class="app"><svg viewBox="0 0 80 82"><g clip-path="url(#cTile)"><path d="M0 0h80v82H0z" fill="#f7f6f4"/><path d="M0 0h80v26H0z" fill="url(#gRed)"/></g><text x="40" y="20" text-anchor="middle" font-family="Inter" font-size="15.500" font-weight="600" fill="#fff">JUL</text><text x="40" y="69" text-anchor="middle" font-family="Inter" font-size="49" font-weight="300" textLength="48" fill="#222">13</text></svg></div>
  <div class="app running"><svg viewBox="0 0 80 82"><g clip-path="url(#cTile)"><path d="M0 0h80v82H0z" fill="#f2f1ef"/><path d="M0 0h80v21H0z" fill="url(#gNote)"/><path d="M0 22h80" stroke="#a99c78" stroke-width="2"/><path d="M0 41h80M0 61h80" stroke="#cfcfcf" stroke-width="1.500"/><path d="M2 25h78" stroke="#bbb" stroke-width="2" stroke-dasharray="1 2"/></g></svg></div>
  <div class="app running"><svg><use href="#dKeynote"/></svg></div>
  <div class="app"><svg viewBox="0 0 80 82"><rect y="1" width="80" height="80" rx="18" fill="url(#gGear)"/><circle cx="40" cy="41" r="34.500" fill="#2b2c2e"/><circle cx="40" cy="41" r="32" fill="none" stroke="#9b9c9e" stroke-width="3.500" stroke-dasharray="1.500 1.500"/><circle cx="40" cy="41" r="26" fill="none" stroke="#a3a4a6" stroke-width="4.500"/><circle cx="40" cy="41" r="15" fill="#55575b" stroke="#98999b" stroke-width="3"/><path d="M40 41h26M40 41L27 18.500M40 41L27 63.500" stroke="#b4b5b7" stroke-width="4"/></svg><b class="badge">1</b></div>
  <div class="app"><svg viewBox="0 0 80 82"><circle cx="40" cy="41" r="41" fill="#65d36e"/><g fill="none" stroke="#111" stroke-linecap="round"><path d="M15 28q28-7 52 7" stroke-width="8"/><path d="M17 43q24-7 44 6" stroke-width="6.500"/><path d="M20 56q19-5 35 5" stroke-width="5.500"/></g></svg></div>
  <div class="app"><svg viewBox="0 0 80 82"><rect y="1" width="80" height="80" rx="18" fill="#fff"/><path d="M23 14h41v9H23z" fill="#2456a0"/><path d="M23 22h41v22H23z" fill="#3a86d6"/><path d="M38 22h13v12H38zM51 34h13v10H51z" fill="#5bb4f0"/><path d="M51 22h13v12H51z" fill="#7ed5fa"/><path d="M22 44l22 10 22-12v25H22z" fill="#4ba0e2"/><rect x="7" y="26" width="30" height="30" rx="3" fill="#2f6fc6"/><ellipse cx="22" cy="41" rx="6" ry="7" fill="none" stroke="#fff" stroke-width="3.500"/></svg></div>
  <div class="app running"><svg><use href="#dExcel"/></svg></div>
  <div class="app"><svg viewBox="0 0 80 82"><rect y="1" width="80" height="80" rx="18" fill="url(#gWa)"/><use href="#wa" x="8" y="4" width="64" height="73" fill="#fff"/></svg></div>
  <div class="app"><svg viewBox="0 0 80 82"><rect y="1" width="80" height="80" rx="18" fill="#fff"/><path d="M22 14h44v14H22z" fill="#5ba2e6"/><path d="M22 28h44v13H22z" fill="#4179cd"/><path d="M22 41h44v13H22z" fill="#2a57b5"/><path d="M22 54h44v13H22z" fill="#1e3f88"/><rect x="7" y="26" width="30" height="30" rx="3" fill="#2555b4"/><path d="M13 33l4 15 5-14 5 14 4-15" fill="none" stroke="#fff" stroke-width="3"/></svg></div>
  <div class="app"><svg viewBox="0 0 80 82"><g stroke="#fff" stroke-width="3"><path d="M4 8q0-3 3-4L60 0q5 0 5 4v60L6 72q-3 0-3-4z"/><path d="M13 17q0-4 4-4l56-4q5 0 5 5v58q0 4-4 4l-56 6q-5 0-5-4z"/></g><path d="M19 31l51-4v43l-51 4z" fill="#fff"/><text x="45" y="66" text-anchor="middle" font-family="Liberation Serif" font-weight="700" font-size="40">31</text></svg></div>
  <div class="app"><svg class="wide" viewBox="0 0 94 94"><circle cx="47" cy="46" r="46.500" fill="#fff"/><circle cx="47" cy="46" r="32.500" fill="none" stroke="#964b84" stroke-width="16.500"/></svg></div>
  <div class="app"><svg viewBox="0 0 80 82"><rect y="1" width="80" height="80" rx="18" fill="#c8cac2"/><rect x="24" y="7" width="33" height="69" rx="6" fill="url(#gPhone)"/><path d="M56 26c-4 14-24 18-31 46q2 4 6 4h20q5-1 5-6z" fill="url(#gWave)"/><rect x="24" y="7" width="33" height="69" rx="6" fill="none" stroke="#111" stroke-width="2"/><rect x="35" y="9" width="10" height="3.500" rx="1.700"/></svg></div>
  <div class="app running"><svg viewBox="0 0 80 82"><rect y="1" width="80" height="80" rx="18" fill="#161a24"/><g fill="#ec6a30"><rect x="21" y="16" width="21" height="17" rx="3"/><rect x="42" y="33" width="21" height="16" rx="3"/><rect x="21" y="49" width="21" height="17" rx="3"/></g></svg></div>
  <div class="app running"><svg viewBox="0 0 80 82"><rect y="1" width="80" height="80" rx="18" fill="url(#gGh)"/><use href="#github" x="7" y="8" width="66" height="66" fill="#ecebf2"/></svg></div>
  <div class="app running"><svg viewBox="0 0 80 82"><rect y="1" width="80" height="80" rx="18" fill="#fff"/><path d="M12 52l5 4 37-29V13L12 48z" fill="#2766ab"/><path d="M12 30l5-4 37 29v14L12 34z" fill="#3478c8"/><path d="M54 13l13 6v44l-13 6z" fill="#4a9be8"/></svg></div>
  <i class="divider first"></i>
  <div class="app running"><svg><use href="#dAcrobat"/></svg></div>
  <div class="app"><svg viewBox="0 0 80 82"><rect y="1" width="80" height="80" rx="18" fill="#f3f4f6"/><rect x="6" y="7" width="68" height="68" rx="13" fill="url(#gSea)"/><path d="M43 56h33l6 23q0 6-6 6H42q-6 0-5-6z" fill="#c7cbd0" stroke="#6d7177" stroke-width="2"/><path d="M47 62l10-3 14 4-4 12-14 4z" fill="#e9edf0"/><path d="M50 64l6 4-2 5zM62 62l5 5-6 5z" fill="#6c87a3"/><rect x="42" y="40" width="35" height="18" rx="6" fill="#1b1c1e"/><path d="M45 43q15-4 29 0" stroke="#666" stroke-width="2" fill="none"/></svg></div>
  <div class="app"><svg viewBox="0 0 80 82"><g clip-path="url(#cEarth)"><path d="M-6-8h92v92H-6z" fill="#eef0f2"/><path d="M-6 10C20-10 40 30 84 24v22C50 50 26 8-6 26zM-6 42c26-4 40 30 70 36H-6z" fill="#9ba5b8"/></g><rect x="14" y="62" width="52" height="25" rx="4" fill="#3c4042"/><text x="40" y="82" text-anchor="middle" font-family="Inter" font-size="21" fill="#fff">Pro</text></svg></div>
  <i class="divider second"></i>
  <div class="app"><svg viewBox="0 0 80 82"><path d="M14-6h30l16 20v30H14z" fill="#f2f2f2"/><path d="M34-6h8v20h-8z" fill="#555"/><path d="M2 10q0-5 5-5h18l8 7h38q4 0 4 4v20H2z" fill="#4aa0dc"/><path d="M-2 13h64l18 22v42H-2z" fill="#e6e7e3"/><path d="M58 13l22 22H64q-4-8-6-22z" fill="#fff"/><path d="M2 18h32M2 22h32M2 26h32M2 30h32M2 34h30M2 46h40M2 50h42M2 54h40M2 58h42M2 70h38" stroke="#8f938c" stroke-width="1.600" stroke-dasharray="6 1 10 1"/><path d="M-2 40h82" stroke="#8da186" stroke-width="3"/><path d="M44 18v20M50 22v16" stroke="#a2705f" stroke-width="3"/><text x="38" y="71" text-anchor="middle" font-family="Inter" font-size="14" fill="#777">XLSX</text></svg></div>
  <div class="app"><svg class="wide" viewBox="0 0 94 94"><path d="M0 18h94v58H0z" fill="#fafafa"/><path d="M0 18h94v4H0z" fill="#e9e4ea"/><path d="M4 27h10M4 32h8M4 37h10M4 42h8M4 47h10M4 52h8M4 57h10M32 26h28M42 34h20" stroke="#b5b5b5" stroke-width="1.500"/><path d="M19 22v54" stroke="#ddd"/><path d="M30 48h50v2H30zM36 50h12v5H36z" fill="#222"/><use href="#dAcrobat" x="61" y="62" width="31" height="31"/></svg></div>
  <div class="app"><svg class="wide" viewBox="0 0 94 94"><path d="M0 23h94v48H0z" fill="#e3e3e4"/><path d="M0 27h10v44H0z" fill="#2d2727"/><path d="M1 49h8v6H1z" fill="#e4583f"/><path d="M18 34h53v30H18z" fill="#2c2b2d"/><path d="M38 44q6-10 14 2l4 16H36z" fill="#5b4a41"/><text x="44" y="52" text-anchor="middle" font-family="Inter" font-size="5.500" font-weight="800" fill="#fff"><tspan fill="#e44">AGILE</tspan> APPROACH</text><use href="#dKeynote" x="61" y="62" width="31" height="31"/></svg></div>
  <div class="app"><svg class="wide" viewBox="0 0 94 94"><path d="M0 20h94v54H0z" fill="#eef1ea"/><path d="M0 20h94v3H0z" fill="#2f7a48"/><path d="M0 28h94v4H0z" fill="#f6edcf"/><path d="M2 40h90M2 44h90M2 52h90M2 56h90M2 64h90M2 70h90" stroke="#9fb5a2" stroke-width="1.500" stroke-dasharray="8 2"/><path d="M34 42h20v10H34z" fill="#a9c4a0"/><path d="M64 42h28v12H64z" fill="#b9cfe4"/><use href="#dExcel" x="61" y="62" width="31" height="31"/></svg></div>
  <div class="app"><svg class="wide" viewBox="0 0 94 94"><path d="M0 20h94v53H0z" fill="#ececed"/><path d="M0 25h8v44H0z" fill="#222"/><path d="M9 29h69v40H9z"/><text x="16" y="37" font-family="Inter" font-size="4.200" font-weight="700" fill="#fff">Control <tspan fill="#49c25d">Inteligente</tspan> de Cruces</text><text x="16" y="42" font-family="Inter" font-size="4.200" font-weight="700" fill="#fff">Formulados</text><path d="M16 49h20M16 52h30" stroke="#3b8a49" stroke-width="1.500"/><use href="#dKeynote" x="61" y="62" width="31" height="31"/></svg></div>
  <div class="app"><svg viewBox="0 0 80 82"><path d="M6 2l10-8 10 4 8-7 12 7 8-6 10 8 10-2v14H6z" fill="#e9e9e9"/><path d="M12 4l10-7 4 9zM34 4l8-7 8 7zM56 0l10-2-4 10zM24 6l12-6v8z" fill="#555"/><path d="M34 0l8 2-6 6z" fill="#49c0a5"/><path d="M44 4l8-6 2 10z" fill="#b8543a"/><path d="M4 2q36 16 72 0l-8 72q-1 12-28 12T13 74z" fill="url(#gTrash)" opacity=".95"/></svg></div>
</footer>
</body>
</html>
```
FILE: styles.css
```css
* { box-sizing: border-box; }
html, body { margin: 0; width: 3420px; height: 2214px; overflow: hidden; }
body {
  position: relative;
  display: flex;
  flex-direction: column;
  font-family: Inter, "Liberation Sans", sans-serif;
  color: #1f2023;
  background: linear-gradient(180deg, #4868a2 0, #5573a8 400px, #6a86b6 610px, #2c3656 640px, #39496e 920px, #090a0c 960px, #0b0d0a 1320px, #2a3a5c 1370px, #27344f 1590px, #1e1d1b 1640px, #39431a 1690px, #2c3414 2214px);
}
svg { display: block; flex: none; }
p, h2, h3 { margin: 0; }
a { color: inherit; text-decoration: none; }
.sprite { position: absolute; width: 0; height: 0; }
.wallpaper { position: absolute; left: 0; bottom: 0; width: 3420px; height: 160px; z-index: -1; }

/* macOS menu bar */
.menubar {
  height: 76px;
  flex: none;
  display: flex;
  justify-content: space-between;
  align-items: center;
  padding: 0 0 2px 40px;
  font-size: 26px;
  font-weight: 500;
  letter-spacing: -0.4px;
  color: #fff;
  background: linear-gradient(90deg, #48679f, #5272a8 50%, #6382b5);
}
.menus {
  display: grid;
  align-items: center;
  grid-template-columns: 69px 141px 132px 130px 198px 140px 150px 132px 138px 139px 100px;
  text-shadow: 0 4px 8px rgba(0, 0, 0, .28);
}
.menus b { font-weight: 700; letter-spacing: 0; font-size: 25px; }
.apple-logo { width: 28px; height: 36px; fill: #fff; margin-top: -2px; }
.status {
  display: grid;
  align-items: center;
  grid-template-columns: 72px 70px 64px 68px 140px 74px 66px 65px 249px;
  filter: drop-shadow(0 4px 4px rgba(0, 0, 0, .18));
}
.battery { display: flex; align-items: center; gap: 9px; font-size: 22px; letter-spacing: -0.6px; }
.clock { display: flex; gap: 15px; padding-left: 1px; white-space: nowrap; letter-spacing: 0; }

/* Browser window */
.browser {
  width: 3400px;
  height: 1993px;
  flex: none;
  margin: 2px 0 0 16px;
  border-radius: 20px;
  overflow: hidden;
  display: flex;
  flex-direction: column;
  background: #d3e8c3;
}
.tabstrip {
  height: 80px;
  flex: none;
  display: flex;
  align-items: center;
  box-shadow: inset 0 2px 0 #e6f2dd;
}
.lights { display: flex; gap: 16px; width: 184px; padding-left: 42px; padding-top: 2px; }
.light { width: 24px; height: 24px; border-radius: 50%; }
.red { background: #ec6b60; }
.amber { background: #f4bf50; }
.green { background: #61c555; }
.tabs { display: flex; height: 100%; align-items: center; padding-left: 16px; }
.tab { position: relative; width: 130px; display: flex; align-items: center; font-size: 24px; font-weight: 500; letter-spacing: -0.9px; }
.tab.narrow { width: 128px; }
.tab svg { width: 32px; height: 32px; }
.tab svg.ringed { width: 40px; height: 40px; margin: 0 -4px; }
.tab span {
  width: 38px;
  margin-left: 16px;
  padding-bottom: 2px;
  overflow: hidden;
  white-space: nowrap;
  -webkit-mask-image: linear-gradient(90deg, #000 60%, transparent);
  mask-image: linear-gradient(90deg, #000 60%, transparent);
}
.tab span.whole { -webkit-mask-image: none; mask-image: none; letter-spacing: 0; }
.tab::after { content: ""; width: 4px; height: 32px; margin-left: 20px; border-radius: 2px; background: #fff; }
.tab.narrow::after { margin-left: 19px; }
.tab.plain::after { display: none; }
.tab.active {
  width: 118px;
  height: 68px;
  margin: 0 28px 0 -16px;
  padding-left: 16px;
  gap: 30px;
  align-self: flex-end;
  border-radius: 20px 20px 0 0;
  background: #fff;
}
.tab.active svg { margin-top: -12px; }
.tab.active .close { width: 18px; height: 18px; margin-top: -12px; }
.tab.active::before, .tab.active::after {
  content: "";
  position: absolute;
  bottom: 0;
  width: 24px;
  height: 24px;
  margin: 0;
  border-radius: 0;
}
.tab.active::before { left: -24px; background: radial-gradient(circle at 0 0, transparent 23.500px, #fff 24px); }
.tab.active::after { right: -24px; background: radial-gradient(circle at 100% 0, transparent 23.500px, #fff 24px); }
.newtab { width: 22px; height: 22px; margin-left: 1px; }
.tabmenu { width: 56px; height: 56px; margin-left: auto; margin-right: 12px; border-radius: 20px; background: #fff; display: grid; place-items: center; }
.tabmenu svg { width: 20px; height: 12px; }

.toolbar {
  height: 92px;
  flex: none;
  display: flex;
  align-items: center;
  padding: 0 12px 0 31px;
  background: #fff;
  border-radius: 20px 20px 0 0;
}
.tool { width: 28px; height: 28px; margin-right: 44px; }
.tool:nth-child(3) { margin-right: 37px; }
.omnibox { width: 2592px; height: 68px; border-radius: 34px; background: #e1e1e1; display: flex; align-items: center; padding: 0 32px 0 10px; }
.siteinfo { width: 48px; height: 48px; border-radius: 50%; background: #fff; display: grid; place-items: center; }
.siteinfo svg { width: 26px; height: 26px; }
.url { margin-left: 16px; font-size: 28px; letter-spacing: 0.19px; }
.url em { font-style: normal; color: #5f6368; }
.star { width: 32px; height: 32px; margin-left: auto; }
.puzzle { width: 36px; height: 36px; margin: -4px 0 0 36px; }
.tooldiv { width: 4px; height: 32px; border-radius: 2px; background: #d3e8c3; }
.toolbar .tooldiv { margin-left: 31px; }
.avatar { width: 40px; height: 40px; margin-left: 32px; }
.update { width: 352px; height: 68px; margin-left: auto; padding: 0 29px 0 24px; border-radius: 34px; background: #d3e8c3; display: flex; align-items: center; justify-content: space-between; font-size: 26px; font-weight: 500; letter-spacing: -0.3px; white-space: nowrap; }
.update svg { width: 6px; height: 28px; }

.bookmarks {
  height: 70px;
  flex: none;
  display: grid;
  align-items: center;
  padding: 0 0 14px 38px;
  grid-template-columns: 58px 32px 109px 90px 111px 137px 156px 90px 117px 109px 120px 109px 128px 127px 155px 95px 142px 130px 123px 162px 112px 199px 148px 161px 360px 30px;
  background: #fff;
  border-bottom: 2px solid #ccc;
  font-size: 24px;
  font-weight: 500;
  letter-spacing: -0.4px;
}
.bookmarks a { display: flex; align-items: center; gap: 12px; white-space: nowrap; }
.bookmarks a svg { width: 32px; height: 32px; }
.apps { width: 28px; height: 28px; }
.more { width: 20px; height: 16px; }

/* Site */
.viewport { flex: 1; display: flex; min-height: 0; }
.page { position: relative; width: 3384px; display: flex; flex-direction: column; background: #faf6f5; font-size: 32px; letter-spacing: -0.65px; }
.sitenav {
  height: 160px;
  flex: none;
  display: flex;
  align-items: center;
  padding: 0 188px;
  background: #111628;
  color: #fff;
  box-shadow: 0 20px 30px -6px rgba(0, 0, 0, .1), 0 8px 12px -8px rgba(0, 0, 0, .1);
}
.brand { display: flex; gap: 24px; width: 731px; }
.logo { width: 112px; height: 112px; }
.brandtext { display: flex; flex-direction: column; padding-top: 6px; }
.brandtext strong { font-size: 47px; line-height: 64px; font-weight: 700; letter-spacing: 0.3px; font-feature-settings: "cv11"; }
.brandtext span { margin-top: 2px; font-size: 24px; line-height: 34px; letter-spacing: 0.2px; color: #e5e7eb; }
.links { display: grid; align-items: center; grid-template-columns: 187px 247px 240px 241px 222px 220px 38px 236px; font-weight: 500; letter-spacing: -0.4px; }
.links a { display: flex; align-items: center; gap: 16px; }
.links svg { width: 32px; height: 32px; fill: #d3d4d8; }
.links .w36 { width: 36px; }
.links .w40 { width: 40px; }
.links i { width: 2px; height: 29px; margin-top: 4px; background: #4b5060; }
.links .current { color: #fde08a; font-weight: 600; letter-spacing: -0.75px; }
.lang { width: 280px; height: 80px; margin-left: auto; padding: 8px; border-radius: 40px; background: #f3f4f6; display: flex; color: #6b7280; font-size: 28px; letter-spacing: -0.4px; }
.lang div { display: flex; align-items: center; gap: 8px; width: 131px; padding-left: 24px; border-radius: 32px; }
.lang svg { width: 40px; height: 30px; }
.lang .on { background: #111628; color: #fff; }

.market { height: 1290px; flex: none; padding: 80px 188px 0; }
.filters {
  height: 340px;
  padding: 48px;
  display: grid;
  grid-template-columns: repeat(3, 1fr);
  grid-template-rows: 132px 80px;
  gap: 32px;
  align-content: start;
  border-radius: 16px;
  background: #fff;
  box-shadow: 0 8px 12px -2px rgba(0, 0, 0, .1), 0 4px 8px -4px rgba(0, 0, 0, .1);
}
.field { display: flex; flex-direction: column; gap: 7px; }
.field label { padding-top: 1px; font-size: 28px; line-height: 40px; font-weight: 500; color: #374151; letter-spacing: -0.25px; }
.input, .select { display: flex; align-items: center; border: 2px solid #d1d5db; border-radius: 16px; background: #fff; }
.input span, .select span { padding-top: 1px; }
.input { height: 84px; padding-left: 22px; gap: 26px; color: #9ca3af; letter-spacing: -0.75px; }
.input svg { width: 32px; height: 32px; fill: #9ca3af; }
.select { height: 78px; justify-content: space-between; padding: 0 5px 0 24px; color: #111628; letter-spacing: -0.78px; }
.select svg { width: 20px; height: 12px; }
.select.focus { border: 4px solid #2b5fc7; padding: 0 3px 0 22px; letter-spacing: -0.6px; box-shadow: 0 0 0 2px #fff, 0 0 0 4px #f4cd47; }
.apply { grid-column: 3; justify-self: end; width: 322px; height: 80px; border-radius: 16px; background: #111628; color: #fff; font-weight: 500; letter-spacing: -0.1px; display: flex; align-items: center; justify-content: center; gap: 16px; }
.apply svg { width: 32px; height: 32px; fill: #fff; }
.results { display: flex; justify-content: space-between; align-items: center; height: 78px; margin-top: 64px; padding-top: 1px; color: #4b5563; }
.results b { font-weight: 600; }
.sort { display: flex; align-items: center; gap: 16px; letter-spacing: -0.7px; }
.sort .select { width: 442px; letter-spacing: -0.55px; }
.empty { display: flex; flex-direction: column; align-items: center; margin-top: 144px; }
.empty svg { width: 96px; height: 96px; fill: #9ca3af; }
.empty h3 { margin-top: 33px; font-size: 40px; line-height: 56px; font-weight: 600; letter-spacing: -1.1px; color: #4b5563; }
.empty p { margin-top: 16px; line-height: 48px; letter-spacing: -0.6px; color: #6b7280; }

.contact { flex: 1; display: flex; flex-direction: column; align-items: center; background: #111628; color: #fff; }
.contact h2 { margin-top: 15px; font-size: 74px; line-height: 80px; font-weight: 750; letter-spacing: 1px; font-feature-settings: "cv11"; }
.contact i { width: 160px; height: 8px; margin-top: 33px; background: #f4cd47; }
.contact p { margin-top: 48px; line-height: 52px; letter-spacing: -0.75px; color: #f3f4f6; }

.floaters { position: absolute; right: 40px; bottom: 39px; display: flex; flex-direction: column; align-items: flex-end; gap: 24px; }
.wabtn, .upbtn { display: grid; place-items: center; border-radius: 42px; }
.wabtn { width: 83px; height: 104px; background: #60c36a; }
.wabtn svg { width: 36px; height: 40px; fill: #fff; }
.upbtn { width: 72px; height: 96px; background: #f4cf4a; }
.upbtn svg { width: 28px; height: 32px; }
.scrollbar { width: 16px; background: #f1f1f1; }
.scrollbar i { display: block; width: 16px; height: 225px; margin-top: 1355px; border-radius: 8px; background: #888; }

/* Dock */
.dock {
  width: 3238px;
  height: 130px;
  flex: none;
  margin: 3px 0 0 91px;
  padding: 17px 0 0 3px;
  display: flex;
  border: 2px solid #9aa07e;
  border-radius: 44px;
  background: linear-gradient(90deg, #6f755b, #787e5d 45%, #888f60);
}
.app { position: relative; width: 108px; flex: none; display: flex; flex-direction: column; align-items: center; }
.app svg { width: 80px; height: 82px; overflow: visible; filter: drop-shadow(0 2px 2px rgba(0, 0, 0, .25)); }
.app svg.wide { width: 94px; height: 94px; margin-top: -7px; }
.running::after { content: ""; width: 8px; height: 8px; margin-top: 17px; border-radius: 50%; background: #000; }
.badge { position: absolute; top: -11px; right: 0; width: 40px; height: 40px; border-radius: 50%; background: #e14f3e; color: #fff; font-size: 24px; font-weight: 400; line-height: 40px; text-align: center; }
.divider { width: 2px; height: 94px; background: #4c522f; }
.divider.first { margin: 0 21px 0 24px; }
.divider.second { margin: 0 22px 0 25px; }
```
